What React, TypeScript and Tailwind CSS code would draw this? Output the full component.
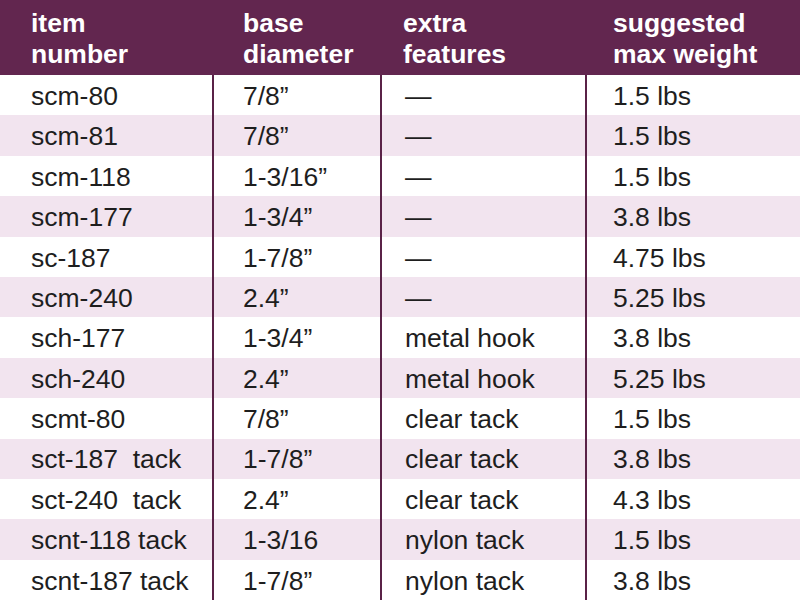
import React from "react";

const rows: [string, string, string, string][] = [
  ["scm-80", "7/8\u201d", "\u2014", "1.5 lbs"],
  ["scm-81", "7/8\u201d", "\u2014", "1.5 lbs"],
  ["scm-118", "1-3/16\u201d", "\u2014", "1.5 lbs"],
  ["scm-177", "1-3/4\u201d", "\u2014", "3.8 lbs"],
  ["sc-187", "1-7/8\u201d", "\u2014", "4.75 lbs"],
  ["scm-240", "2.4\u201d", "\u2014", "5.25 lbs"],
  ["sch-177", "1-3/4\u201d", "metal hook", "3.8 lbs"],
  ["sch-240", "2.4\u201d", "metal hook", "5.25 lbs"],
  ["scmt-80", "7/8\u201d", "clear tack", "1.5 lbs"],
  ["sct-187\u00a0 tack", "1-7/8\u201d", "clear tack", "3.8 lbs"],
  ["sct-240\u00a0 tack", "2.4\u201d", "clear tack", "4.3 lbs"],
  ["scnt-118 tack", "1-3/16", "nylon tack", "1.5 lbs"],
  ["scnt-187 tack", "1-7/8\u201d", "nylon tack", "3.8 lbs"],
];

export default function App() {
  return (
    <div
      className="w-[800px] h-[600px] flex flex-col overflow-hidden bg-white"
      style={{ fontFamily: '"Liberation Sans", Arial, sans-serif' }}
    >
      <div className="h-[75px] shrink-0 bg-[#62264f] grid grid-cols-[212px_168px_205px_1fr] text-white font-bold text-[26.5px] leading-[31px]">
        <div className="pl-[31px] pt-[8px]">item<br />number</div>
        <div className="pl-[31px] pt-[8px]">base<br />diameter</div>
        <div className="pl-[23px] pt-[8px]">extra<br />features</div>
        <div className="pl-[28px] pt-[8px]">suggested<br />max weight</div>
      </div>
      {rows.map((r, i) => (
        <div
          key={i}
          className={
            "flex-1 grid grid-cols-[212px_168px_205px_1fr] text-[26.5px] text-[#1e1e1e] leading-none " +
            (i % 2 === 1 ? "bg-[#f2e4ef]" : "bg-white")
          }
        >
          <div className="pl-[31px] pt-[2px] flex items-center">{r[0]}</div>
          <div className="pl-[29px] pt-[2px] flex items-center border-l-2 border-[#5a2247]">{r[1]}</div>
          <div className="pl-[23px] pt-[2px] flex items-center border-l-2 border-[#5a2247]">{r[2]}</div>
          <div className="pl-[26px] pt-[2px] flex items-center border-l-2 border-[#5a2247]">{r[3]}</div>
        </div>
      ))}
    </div>
  );
}
